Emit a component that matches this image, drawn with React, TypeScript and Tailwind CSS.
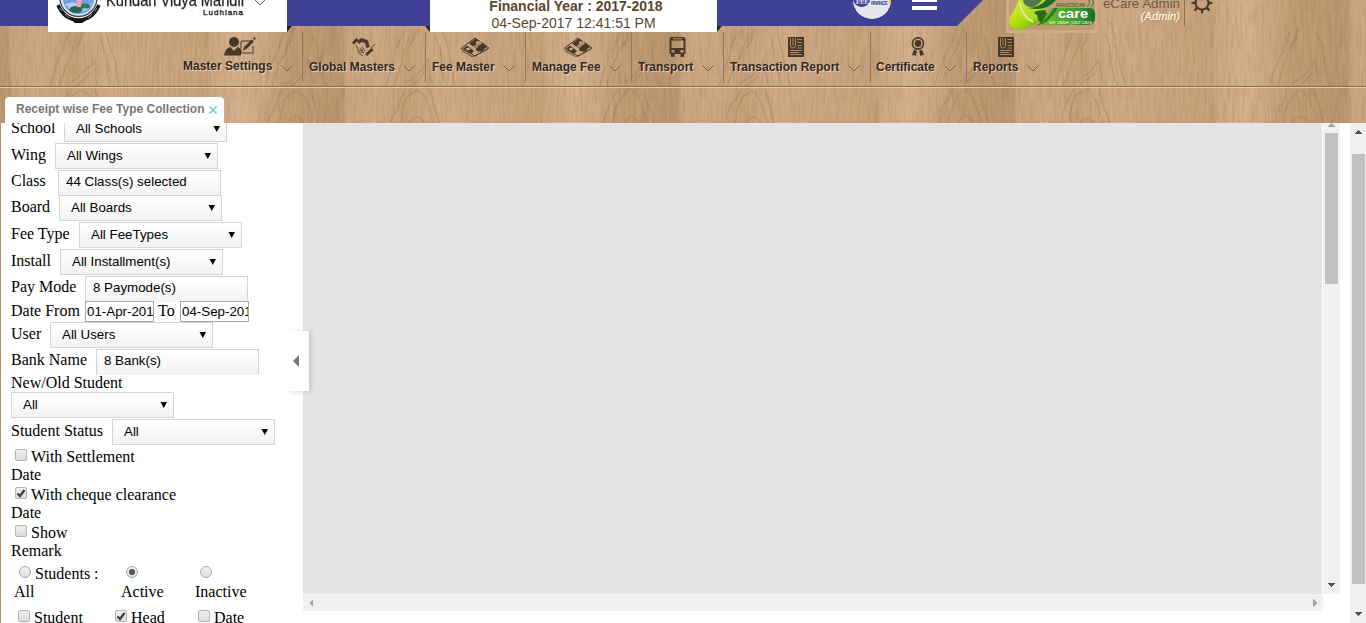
import React from "react";

const ink = "#4a3826";

function Wood() {
  return (
    <svg className="absolute inset-0 h-full w-full" aria-hidden="true">
      <defs>
        <linearGradient id="planks">
          <stop offset="0" stopColor="#b8946f" />
          <stop offset=".025" stopColor="#bb9771" />
          <stop offset=".035" stopColor="#c8a580" />
          <stop offset=".12" stopColor="#cca984" />
          <stop offset=".22" stopColor="#c5a17b" />
          <stop offset=".32" stopColor="#ceab87" />
          <stop offset=".45" stopColor="#c9a681" />
          <stop offset=".6" stopColor="#c6a27c" />
          <stop offset=".62" stopColor="#c3a07a" />
          <stop offset=".63" stopColor="#cba883" />
          <stop offset=".72" stopColor="#d3b18d" />
          <stop offset=".8" stopColor="#c9a580" />
          <stop offset=".86" stopColor="#bf9b75" />
          <stop offset=".92" stopColor="#bd9973" />
          <stop offset="1" stopColor="#b8946f" />
        </linearGradient>
        <filter id="rough" x="0" y="0" width="100%" height="100%" colorInterpolationFilters="sRGB">
          <feTurbulence type="fractalNoise" baseFrequency=".05 .03" numOctaves="2" seed="9" result="n" />
          <feDisplacementMap in="SourceGraphic" in2="n" scale="6" xChannelSelector="R" yChannelSelector="G" />
          <feGaussianBlur stdDeviation=".7" />
        </filter>
        <pattern id="plank" width="335" height="87" patternUnits="userSpaceOnUse">
          <rect width="335" height="87" fill="url(#planks)" />
        </pattern>
        <pattern id="rings" width="335" height="87" patternUnits="userSpaceOnUse">
          <g fill="none" stroke="#8f6b48" strokeOpacity=".3" strokeWidth="1.400">
            <path d="M50 87C58 60 62 44 70 30M58 87C66 70 68 50 78 34M70 84Q84 76 94 60L98 84M76 86Q84 80 90 72M100 34C106 52 106 70 112 87M105 22Q114 60 120 87" />
            <path d="M264 87C272 66 276 48 286 32M272 87Q278 66 284 52L292 38M286 84Q300 76 310 60L314 84M292 86Q300 80 306 72M312 34C322 52 318 70 326 87" />
          </g>
          <path d="M74 50l8-22 3 2-6 14zM284 50l8-22 3 2-6 14z" fill="#8f6b48" fillOpacity=".25" />
        </pattern>
        <pattern id="ringsLow" width="335" height="35" patternUnits="userSpaceOnUse">
          <g fill="none" stroke="#8f6b48" strokeOpacity=".3" strokeWidth="1.400">
            <path d="M56 35Q62 14 70 2M66 35Q66 6 82 2 92 8 98 35M75 35Q82 24 90 35M104 35Q98 12 94 2" />
            <path d="M268 35Q276 16 282 2M278 35Q284 6 296 2 306 8 312 35M288 35Q296 22 304 35M318 35Q314 12 308 2" />
          </g>
        </pattern>
        <filter id="grain" x="0" y="0" width="100%" height="100%" colorInterpolationFilters="sRGB">
          <feTurbulence type="fractalNoise" baseFrequency=".42 .04" numOctaves="2" seed="4" />
          <feColorMatrix values="0 0 0 0 .5  0 0 0 0 .35  0 0 0 0 .21  1.1 0 0 0 -.42" />
        </filter>
        <filter id="sheen" x="0" y="0" width="100%" height="100%" colorInterpolationFilters="sRGB">
          <feTurbulence type="fractalNoise" baseFrequency=".4 .04" numOctaves="2" seed="11" />
          <feColorMatrix values="0 0 0 0 .88  0 0 0 0 .76  0 0 0 0 .61  1 0 0 0 -.4" />
        </filter>
      </defs>
      <rect width="100%" height="88" fill="url(#plank)" />
      <rect width="100%" height="86" fill="url(#rings)" filter="url(#rough)" />
      <svg y="88" width="100%" height="35">
        <rect width="100%" height="35" fill="url(#plank)" />
        <rect width="100%" height="35" fill="url(#ringsLow)" filter="url(#rough)" />
      </svg>
      <rect width="100%" height="100%" filter="url(#grain)" opacity=".38" />
      <rect width="100%" height="100%" filter="url(#sheen)" opacity=".4" />
      <rect y="86" width="100%" height="1" fill="#8b7052" />
      <rect y="87" width="100%" height="1" fill="#e3c9a8" />
    </svg>
  );
}

function Crest() {
  return (
    <svg width="46" height="26" viewBox="0 0 46 26" className="ml-[8px] shrink-0">
      <path d="M2 5C6 14 12 20 22.500 20S39 14 43 5" fill="none" stroke="#1b1b1b" strokeWidth="3.600" />
      <path d="M4 8l2 3M9 14l4 4M32 18l4-4M39 11l2-3" stroke="#999" strokeWidth=".8" />
      <circle cx="22.500" cy="-2" r="18.500" fill="#d9e4f6" stroke="#3d4258" strokeWidth="1.300" />
      <path d="M7 0h31c-1 8-7 14-15.500 14S8 8 7 0z" fill="#6f9fe6" />
      <path d="M9 4q8-3 13 0t14-1l-4 6q-9 6-18 0z" fill="#b8cff5" />
      <ellipse cx="20" cy="9.500" rx="6.500" ry="3.600" fill="#27664c" />
      <ellipse cx="29" cy="6" rx="5" ry="2.600" fill="#2f7a57" />
      <path d="M20 0h6l-1 7h-4z" fill="#efa1b8" />
      <path d="M16 20.500l6-1 8 1-4 2.500h-7z" fill="#111" />
    </svg>
  );
}

function ProductLogo() {
  return (
    <div className="h-[33px] w-[92px] bg-[#d0ab87]">
      <svg width="92" height="33" viewBox="0 0 92 33">
        <defs>
          <linearGradient id="lime" x2="1" y2="1">
            <stop stopColor="#f0f52f" />
            <stop offset=".55" stopColor="#a6d80c" />
            <stop offset="1" stopColor="#4c9b18" />
          </linearGradient>
          <linearGradient id="leaf">
            <stop stopColor="#7ac625" />
            <stop offset=".7" stopColor="#3c9a2b" />
            <stop offset="1" stopColor="#176b32" />
          </linearGradient>
        </defs>
        <rect x="3" width="86" height="30" fill="#c29c76" />
        <path d="M46 8h38q5 0 5 6v4q0 7-8 7H30z" fill="url(#leaf)" />
        <path d="M13 0h28Q39 15 32 22 21 31 9 29 1 28 4 17 9 9 13 0z" fill="url(#lime)" />
        <circle cx="24" cy="7" r="14" fill="#b9e03a" opacity=".6" />
        <path d="M17 0q1 6 7 7 6 1 12-7z" fill="#55754c" />
        <path d="M30 11l9-1 2 4-6 9-3-3-1-5-3-2z" fill="#2f6a1b" />
        <path d="M14 3q1 12 13 19" stroke="#e8f7ad" strokeWidth="1.500" fill="none" />
        <path d="M52 8Q42 24 30 26q12-7 18-18z" fill="#2a7a22" />
        <path d="M22 8Q40 12 50 0H40Q34 7 22 8z" fill="#1c6a2a" />
        <path d="M81 7q4-3 2-7M85 7q4-3 2-7" stroke="#39743b" fill="none" />
        <text x="50" y="6.500" fontSize="6" textLength="29" lengthAdjust="spacingAndGlyphs" fontFamily="Liberation Sans" fontStyle="italic" fontWeight="bold" fill="#39743b">FRANCISCAN</text>
        <text x="52" y="18" fontSize="13" textLength="30" lengthAdjust="spacingAndGlyphs" fontFamily="Liberation Sans" fontWeight="bold" fill="#fff">care</text>
        <text x="43" y="23.500" fontSize="5.500" textLength="43" lengthAdjust="spacingAndGlyphs" fontFamily="Liberation Sans" fill="#e8f7d0">we value your care</text>
      </svg>
    </div>
  );
}

function Gear() {
  return (
    <svg width="22" height="14" viewBox="0 0 22 14" className="ml-[6px] shrink-0">
      <circle cx="11" cy="3" r="6.500" fill="none" stroke={ink} strokeWidth="2" />
      <path d="M9.600 9h2.800l-.6 4.500h-1.600zM4.500 1.500v3L.5 3.800V2.200zM17.500 1.500v3l4-.7V2.200zM5 7l2 2-3 2.300-1.200-1.200zM17 7l-2 2 3 2.300 1.200-1.200z" fill={ink} />
    </svg>
  );
}

type Glyph = "user" | "hands" | "money" | "bus" | "doc" | "badge";

function MenuGlyph({ kind }: { kind: Glyph }) {
  if (kind === "user")
    return (
      <svg width="32" height="20" viewBox="0 0 32 20">
        <circle cx="10" cy="5" r="5" fill={ink} />
        <path d="M0 18.500q1-7 6.500-8.500l3.500 4 3.500-4q3 1 3.500 3v5.500z" fill={ink} />
        <path d="M27 4H17v12h12V9" fill="none" stroke={ink} strokeWidth="1" />
        <path d="M19 13.500l1.500-4 7.500-7 2 2-7.500 7.500z" fill={ink} />
        <path d="M29 1.500L30.500 0 32 1.500 30.500 3z" fill={ink} />
      </svg>
    );
  if (kind === "hands")
    return (
      <svg width="26" height="20" viewBox="0 0 26 20">
        <path d="M1 5.500L5.500 1l2 2L3 7.500zM14 17l6.500-6 2 2-6.500 6z" fill={ink} />
        <path d="M7 5.500L10.500 3l5 1.500 1.500 6" fill="none" stroke={ink} strokeWidth="3.400" strokeLinejoin="round" />
        <path d="M5 8l2 5M7 13q1 5 5 5.500M9 11l4 5M11 10l3 4M8 14l4-1M9 16l4-1" stroke={ink} strokeWidth=".8" fill="none" />
        <path d="M20 11l4-4" stroke={ink} strokeWidth=".9" />
      </svg>
    );
  if (kind === "money")
    return (
      <svg width="30" height="20" viewBox="0 0 30 20" className="-ml-[2px]">
        <path d="M1 11.500L15 1l14 10-14 8z" fill="none" stroke={ink} strokeWidth="1" />
        <path d="M3 11.500l4-3 7 5.500-3 3zM9 6.500L15 2q4 0 5 4l-5 5zM18 9l5-3 4 4-6 4z" fill={ink} />
        <circle cx="17.500" cy="5.500" r="1.600" fill="#c7a37d" />
        <path d="M12 12q4-4 9-8" fill="none" stroke="#c7a37d" strokeWidth="1.300" />
        <ellipse cx="20" cy="12" rx="4" ry="2.600" fill={ink} />
        <ellipse cx="8" cy="12" rx="2" ry="1.200" fill="#c7a37d" />
        <path d="M2 14l11 6 15-8" fill="none" stroke={ink} strokeWidth=".8" />
      </svg>
    );
  if (kind === "bus")
    return (
      <svg width="18" height="20" viewBox="0 0 18 20">
        <path fillRule="evenodd" fill={ink} d="M3 0h11q2.500 0 2.500 2.500V17H.5V2.500Q.5 0 3 0zM2.500 3.500V11h12V3.500zM4 1.300v.9h9v-.9zM2.500 13v2.500h3V13zM11.500 13v2.500h3V13z" />
        <path d="M2 16h3.500v4H2zM11.500 16H15v4h-3.500z" fill={ink} />
      </svg>
    );
  if (kind === "doc")
    return (
      <svg width="16" height="20" viewBox="0 0 16 20" className="-ml-[2px]">
        <path d="M0 0h16v20H0z" fill={ink} />
        <path d="M2.500 1v7.500q0 2.500 2.500 2.500t2.500-2.500V1M5 1v7.500" fill="none" stroke="#b7946f" strokeWidth=".9" />
        <path d="M9.500 2.500h4.500M9.500 5.500h4.500M9.500 8.500h4.500M9.500 11h4.500M2 13.500h12M2 15.500h9M2 17.500h12" stroke="#b7946f" strokeWidth=".9" />
      </svg>
    );
  return (
    <svg width="14" height="20" viewBox="0 0 14 20" className="-ml-[2px]">
      <circle cx="7" cy="6.500" r="5.600" fill="none" stroke={ink} strokeWidth="1.600" />
      <circle cx="7" cy="6.500" r="3.400" fill={ink} />
      <path d="M3 12.500l3 1.500-1.500 5.500L3.200 18l-2.400.5zM11 12.500L8 14l1.500 5.500 1.300-1.500 2.400.5z" fill={ink} />
    </svg>
  );
}

const Chevron = ({ className = "" }: { className?: string }) => (
  <svg width="12" height="7" viewBox="0 0 12 7" className={"shrink-0 " + className}>
    <path d="M.5.5L6 6 11.500.5" fill="none" stroke="#7a6046" strokeWidth="1" />
  </svg>
);

const menu: { label: string; glyph: Glyph; size: string; text: string }[] = [
  { label: "Master Settings", glyph: "user", size: "w-[126px]", text: "w-[98px] -mt-px" },
  { label: "Global Masters", glyph: "hands", size: "w-[123px]", text: "w-[94px]" },
  { label: "Fee Master", glyph: "money", size: "w-[100px]", text: "w-[71px]" },
  { label: "Manage Fee", glyph: "money", size: "w-[106px]", text: "w-[77px]" },
  { label: "Transport", glyph: "bus", size: "w-[92px]", text: "w-[64px]" },
  { label: "Transaction Report", glyph: "doc", size: "w-[147px]", text: "w-[118px]" },
  { label: "Certificate", glyph: "badge", size: "w-[96px]", text: "w-[68px] -ml-px" },
  { label: "Reports", glyph: "doc", size: "w-[80px]", text: "w-[54px]" },
];

function Ear({ side }: { side: "left" | "right" }) {
  return (
    <svg width="5" height="6" className="mt-[26px] shrink-0">
      <path d={side === "left" ? "M0 0h5v6z" : "M0 0h5L0 6z"} fill="#2c2520" />
    </svg>
  );
}

function TopBar() {
  return (
    <header className="relative h-[32px]">
      <div className="absolute left-0 top-0 h-[26px] w-[983px] bg-[#3f4096] [clip-path:polygon(0_0,100%_0,957px_100%,0_100%)]" />
      <div className="relative flex h-[32px] items-start pl-[48px]">
        <div className="flex h-[32px] w-[239px] bg-white">
          <Crest />
          <div className="ml-[4px] w-[138px] whitespace-nowrap text-[#222]">
            <div className="-mt-[10px] h-[18px] origin-left scale-x-[.86] text-[17px] leading-[21px] [-webkit-text-stroke:.25px_#222]">Kundan Vidya Mandir</div>
            <div className="text-right text-[8px] leading-[10px] tracking-[1px] [-webkit-text-stroke:.35px_#222]">Ludhiana</div>
          </div>
          <Chevron className="ml-[10px] -mt-[1px]" />
        </div>
        <Ear side="right" />
        <div className="w-[133px]" />
        <Ear side="left" />
        <div className="h-[32px] w-[287px] bg-white text-center text-[14px] leading-[17px] text-[#5b452e]">
          <div className="-mt-[2px] pl-[5px] font-bold">Financial Year : 2017-2018</div>
          <div>04-Sep-2017 12:41:51 PM</div>
        </div>
        <Ear side="right" />
        <svg width="40" height="20" viewBox="0 0 40 20" className="ml-[130px]">
          <circle cx="20" cy="0" r="19" fill="#e4e6ec" />
          <path d="M1 0h17q-1 6-8 7-7 0-9-7z" fill="#3f4096" />
          <text x="4" y="4" fontSize="6.500" fontWeight="bold" fontFamily="Liberation Serif" fill="#dfe2f6">FEE</text>
          <text x="19" y="5" fontSize="5.500" fontWeight="bold" fontFamily="Liberation Sans" fill="#4c4f9d" textLength="17">FINANCE</text>
          <path d="M37 0h2v4h-2z" fill="#e7c244" />
        </svg>
        <div className="ml-[20px] w-[25px]">
          <div className="h-[2px] bg-white" />
          <div className="mt-[4px] h-[4px] bg-white" />
        </div>
        <div className="ml-[69px]">
          <ProductLogo />
        </div>
        <div className="w-[82px] text-right">
          <div className="-mt-[4px] text-[13.333px] leading-[15px] text-[#715843]">eCare Admin</div>
          <div className="text-[11px] italic leading-[10px] tracking-[.1px] text-[#fff3e0] [-webkit-text-stroke:.3px_#fff3e0] [text-shadow:1px_1px_1px_#a07a55]">(Admin)</div>
        </div>
        <div className="ml-[4px] h-[26px] w-px bg-[#8f7355]" />
        <Gear />
      </div>
    </header>
  );
}

function Menu() {
  return (
    <nav className="relative flex h-[50px] pl-[177px]">
      {menu.map((m, i) => (
        <div
          key={m.label}
          className={
            "flex shrink-0 flex-col items-center pt-[5px] " +
            m.size +
            (i < menu.length - 1 ? " border-r border-[#94785a]" : "")
          }
        >
          <div className="h-[20px]">
            <MenuGlyph kind={m.glyph} />
          </div>
          <div className="flex w-full whitespace-nowrap pl-[6px] text-[12px] font-bold leading-[14px] text-[#33281e] [text-shadow:1px_1px_1px_#e9d3b8]">
            <span className={"shrink-0 pt-[3px] " + m.text}>{m.label}</span>
            <Chevron className="mt-[8px]" />
          </div>
        </div>
      ))}
    </nav>
  );
}

function Box({ text, arrow }: { text: string; arrow?: boolean }) {
  return (
    <div
      className={
        "flex h-[26px] w-[163px] shrink-0 items-center justify-between border border-[#d4d4d4] bg-linear-to-b from-white to-[#f3f3f3] pr-[5px] font-[Liberation_Sans,Arial,sans-serif] text-[13.333px] leading-[16px] " +
        (arrow ? "pb-px pl-[11px]" : "border-b-[#f3f3f3] pb-[2px] pl-[7px]")
      }
    >
      <span>{text}</span>
      {arrow && (
        <svg width="8" height="6">
          <path d="M.5 0h6.500L3.750 6z" fill="#000" />
        </svg>
      )}
    </div>
  );
}

const fields = [
  { label: "Wing", value: "All Wings", arrow: true, w: "w-[44px] pt-[3px]", h: "h-[27px]" },
  { label: "Class", value: "44 Class(s) selected", arrow: false, w: "w-[47px] pt-[2px]", h: "h-[25px]" },
  { label: "Board", value: "All Boards", arrow: true, w: "w-[48px] pt-[3px]", h: "h-[27px]" },
  { label: "Fee Type", value: "All FeeTypes", arrow: true, w: "w-[68px] pt-[3px]", h: "h-[27px]" },
  { label: "Install", value: "All Installment(s)", arrow: true, w: "w-[49px] pt-[3px]", h: "h-[27px]" },
  { label: "Pay Mode", value: "8 Paymode(s)", arrow: false, w: "w-[74px] pt-[2px]", h: "h-[25px]" },
];

function DateInput({ value }: { value: string }) {
  return (
    <div className="h-[21px] w-[69px] shrink-0 border border-[#a9a9a9] bg-white pl-px font-[Liberation_Sans,Arial,sans-serif] text-[13.333px] leading-[19px]">
      <div className="w-[66px] overflow-hidden">{value}</div>
    </div>
  );
}

function Check({ on, className = "" }: { on?: boolean; className?: string }) {
  return (
    <span
      className={
        "inline-flex h-[12px] w-[12px] shrink-0 items-center justify-center rounded-[2px] border border-[#b4b4b4] bg-linear-to-b from-[#f0f0f0] to-[#dcdcdc] " +
        className
      }
    >
      {on && (
        <svg width="10" height="9" viewBox="0 0 10 9">
          <path d="M1.500 4.500L4 7l4.500-6" fill="none" stroke="#404040" strokeWidth="2.300" />
        </svg>
      )}
    </span>
  );
}

function Radio({ on, className = "" }: { on?: boolean; className?: string }) {
  return (
    <span
      className={
        "inline-flex h-[12px] w-[12px] shrink-0 items-center justify-center rounded-full border border-[#aaa] bg-linear-to-b from-[#f2f2f2] to-[#ddd] " +
        className
      }
    >
      {on && <span className="h-[6px] w-[6px] rounded-full bg-[#555]" />}
    </span>
  );
}

function Toggle({ first, second, on }: { first: string; second: string; on?: boolean }) {
  return (
    <div className="mb-[2px] h-[36px] leading-[18px]">
      <div className="flex pl-[4px]">
        <Check on={on} className="mr-[4px] mt-px" />
        {first}
      </div>
      <div>{second}</div>
    </div>
  );
}

function Filters() {
  return (
    <aside className="h-[500px] w-[303px] shrink-0 overflow-hidden whitespace-nowrap border-l border-[#b58f68] bg-white pl-[10px] font-[Liberation_Serif,Times_New_Roman,serif] text-[16px] leading-[18px] text-black">
      <div className="mb-px flex h-[19px] items-end">
        <span className="mb-[5px] w-[53px]">School</span>
        <Box text="All Schools" arrow />
      </div>
      {fields.map((f) => (
        <div key={f.label} className={"flex items-start " + f.h}>
          <span className={"shrink-0 " + f.w}>{f.label}</span>
          <Box text={f.value} arrow={f.arrow} />
        </div>
      ))}
      <div className="flex h-[21px] items-start">
        <span className="w-[74px] shrink-0 pt-px">Date From</span>
        <DateInput value="01-Apr-2017" />
        <span className="w-[26px] shrink-0 pl-[4px] pt-px">To</span>
        <DateInput value="04-Sep-2017" />
      </div>
      <div className="flex h-[27px] items-start">
        <span className="w-[39px] pt-[3px]">User</span>
        <Box text="All Users" arrow />
      </div>
      <div className="flex h-[25px] items-start">
        <span className="w-[85px] pt-[2px]">Bank Name</span>
        <Box text="8 Bank(s)" />
      </div>
      <div className="h-[18px]">New/Old Student</div>
      <div className="h-[27px]">
        <Box text="All" arrow />
      </div>
      <div className="flex h-[29px] items-start">
        <span className="w-[101px] pt-[3px]">Student Status</span>
        <Box text="All" arrow />
      </div>
      <Toggle first="With Settlement" second="Date" />
      <Toggle first="With cheque clearance" second="Date" on />
      <Toggle first="Show" second="Remark" />
      <div className="mt-[5px] grid grid-cols-[107px_74px_90px] pl-[3px]">
        <div>
          <div className="flex pl-[5px]"><Radio className="mr-[4px] mt-px" />Students :</div>
          <div>All</div>
        </div>
        <div>
          <div className="flex h-[18px] pl-[5px]"><Radio on className="mt-px" /></div>
          <div>Active</div>
        </div>
        <div>
          <div className="flex h-[18px] pl-[5px]"><Radio className="mt-px" /></div>
          <div>Inactive</div>
        </div>
      </div>
      <div className="mt-[8px] flex pl-[7px]">
        <div className="flex w-[97px]"><Check className="mr-[4px] mt-px" />Student</div>
        <div className="flex w-[83px]"><Check on className="mr-[4px] mt-px" />Head</div>
        <div className="flex"><Check className="mr-[4px] mt-px" />Date</div>
      </div>
    </aside>
  );
}

function Arrow({ d, color }: { d: "up" | "down" | "left" | "right"; color: string }) {
  const paths = { up: "M0 4h8L4 0z", down: "M0 0h8L4 4z", left: "M4 0v8L0 4z", right: "M0 0v8l4-4z" };
  const flat = d === "up" || d === "down";
  return (
    <svg width={flat ? 8 : 4} height={flat ? 4 : 8} className="shrink-0" shapeRendering="crispEdges">
      <path d={paths[d]} fill={color} />
    </svg>
  );
}

export default function App() {
  return (
    <div className="h-[623px] w-[1366px] overflow-hidden bg-white font-[Liberation_Sans,Arial,sans-serif]">
      <div className="relative h-[123px]">
        <Wood />
        <TopBar />
        <Menu />
        <div className="relative ml-[5px] mt-[15px] flex h-[26px] w-[219px] items-center rounded-t-[4px] bg-white pb-[2px] pl-[11px] text-[12px] font-bold text-[#777]">
          <span className="w-[193px] whitespace-nowrap">Receipt wise Fee Type Collection</span>
          <svg width="8" height="8" className="mt-[1px]">
            <path d="M.5.5l7 7M7.500.5l-7 7" stroke="#7cc0ee" strokeWidth="1.500" />
          </svg>
        </div>
      </div>
      <main className="relative flex h-[500px]">
        <Filters />
        <div className="w-[1020px]">
          <div className="h-[471px] border-r border-white bg-[#e4e4e4]" />
          <div className="flex h-[17px] items-center justify-between bg-[#f1f1f1] pl-[6px] pr-[6px]">
            <Arrow d="left" color="#a3a3a3" />
            <Arrow d="right" color="#a3a3a3" />
          </div>
        </div>
        <div className="flex h-[471px] w-[17px] flex-col items-center bg-[#f1f1f1] pr-px">
          <Arrow d="up" color="#a3a3a3" />
          <div className="ml-px mt-[6px] h-[151px] w-[13px] bg-[#c1c1c1]" />
          <div className="mb-[7px] mt-auto flex"><Arrow d="down" color="#505050" /></div>
        </div>
        <div className="ml-[10px] flex h-[500px] w-[16px] flex-col items-center bg-[#f1f1f1] pt-[7px]">
          <Arrow d="up" color="#505050" />
          <div className="mt-[20px] h-[430px] w-[13px] bg-[#c1c1c1]" />
          <div className="mt-[28px] flex"><Arrow d="down" color="#505050" /></div>
        </div>
        <div className="absolute left-[288px] top-[208px] flex h-[60px] w-[21px] items-center bg-white pl-[5px] shadow-[2px_1px_5px_rgba(0,0,0,.15)] [clip-path:inset(-8px_-8px_-8px_0)]">
          <svg width="6" height="12">
            <path d="M6 0v12L0 6z" fill="#777" />
          </svg>
        </div>
      </main>
    </div>
  );
}
